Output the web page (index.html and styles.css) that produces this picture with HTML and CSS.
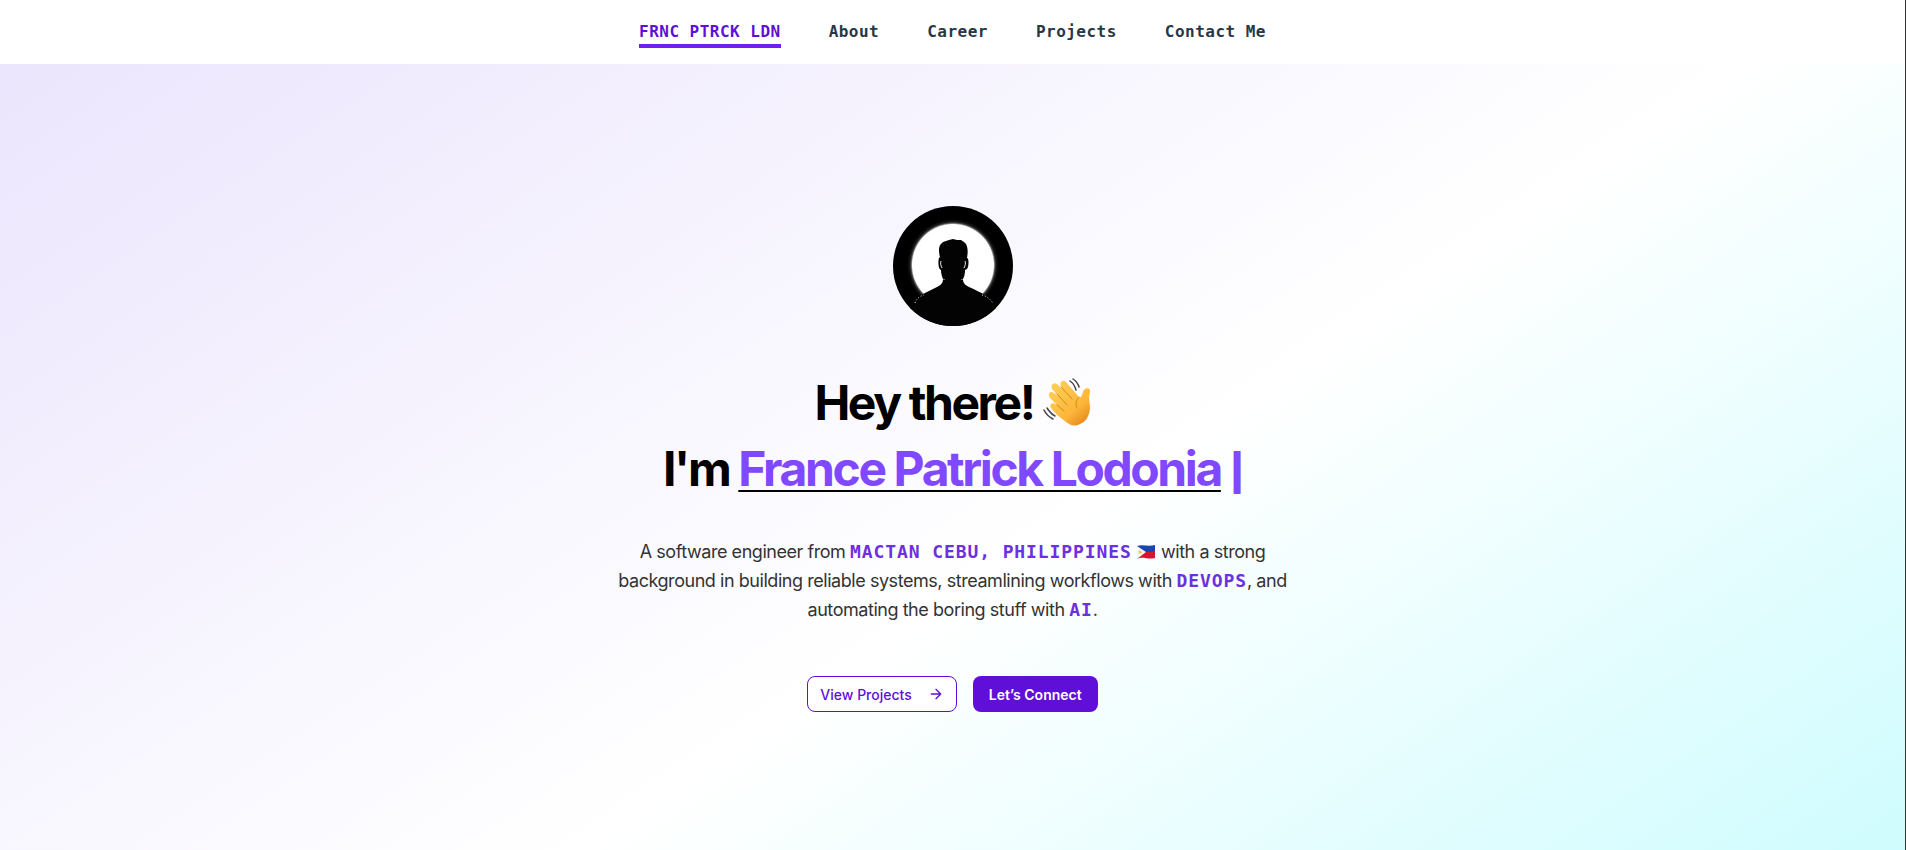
FILE: index.html
```
<!DOCTYPE html>
<html lang="en">
<head>
  <meta charset="UTF-8">
  <meta name="viewport" content="width=device-width, initial-scale=1.0">
  <title>France Patrick Lodonia</title>
  <link rel="stylesheet" href="styles.css">
</head>
<body>
  <header class="navbar">
    <nav class="nav-links">
      <a class="nav-link active" href="#home">FRNC PTRCK LDN</a>
      <a class="nav-link" href="#about">About</a>
      <a class="nav-link" href="#career">Career</a>
      <a class="nav-link" href="#projects">Projects</a>
      <a class="nav-link" href="#contact">Contact Me</a>
    </nav>
  </header>

  <main class="hero" id="home">
    <svg class="avatar" viewBox="0 0 120 120" role="img" aria-label="Portrait silhouette">
      <defs>
        <clipPath id="avatar-clip"><circle cx="60" cy="60" r="60"/></clipPath>
        <radialGradient id="halo">
          <stop offset="0.88" stop-color="#fff"/>
          <stop offset="0.91" stop-color="#555"/>
          <stop offset="0.94" stop-color="#161616"/>
          <stop offset="1" stop-color="#000"/>
        </radialGradient>
      </defs>
      <g clip-path="url(#avatar-clip)">
        <rect width="120" height="120" fill="#000"/>
        <circle cx="60" cy="59" r="46" fill="url(#halo)"/>
        <!-- head and shoulders -->
        <path fill="#030303" d="M47 51 C45 44 46 39 49 37 L50 36 L53 35 L56 34 L60 33 L64 34 L68 34 L71 36 L73 38 C75 42 75 46 74 52 C76 52 76 60 74 63 L72 64 C72 69 71 71 70 73 C70 77 72 79 76 81 C82 84 88 86 93 90 C100 94 105 101 108 122 L12 122 C14 103 18 94 26 90 C32 87 38 84 44 81 C48 79 50 77 50 73 C49 70 48 68 48 64 C45 63 45 55 46 52 Z"/>
        <path fill="none" stroke="#eee" stroke-width="1" d="M48 55 C47 57 48 60 49 62 M72 55 C73 57 72 60 71 62"/>
        <path fill="none" stroke="#ddd" stroke-width="1" stroke-dasharray="1 2" d="M22 97 C24 92 27 90 31 89 M89 89 C93 90 96 92 100 97 M51 73 L51 76 M69 73 L69 76"/>
      </g>
    </svg>

    <h1 class="title">
      Hey there!
      <svg class="wave" viewBox="0 0 48 48" role="img" aria-label="Waving hand">
        <defs>
          <linearGradient id="skin" x1="0" y1="0" x2="0.8" y2="1">
            <stop offset="0" stop-color="#ffd25a"/>
            <stop offset="0.7" stop-color="#fdb73a"/>
            <stop offset="1" stop-color="#e58a1d"/>
          </linearGradient>
        </defs>
        <path fill="url(#skin)" d="M23 44 C16 39 11 34 8 30 C6 27 9 24 12 26 L15 28 L7 20 C4 16 7 12 11 15 L15 18 L9 11 C7 7 11 3 15 7 L19 11 L18 8 C16 4 20 1 23 4 L36 19 C38 20 39 18 40 14 C41 9 48 9 47 14 C45 19 47 25 47 31 C46 38 43 44 37 46 C31 49 27 47 23 44 Z"/>
        <path fill="none" stroke="#d8861c" stroke-width="1" stroke-linecap="round" d="M18 9 L29 21 M14 16 L24 27 M14 27 L21 33 M36 19 C33 22 32 26 34 30"/>
        <path fill="none" stroke="#444" stroke-width="1.5" stroke-linecap="round" d="M30 1 C33 3 35 5 36 9 M27 3 C30 5 32 8 33 12 M1 32 C3 36 6 39 10 41 M4 30 C6 33 8 36 12 38"/>
      </svg>
      <br>
      I'm <span class="name">France Patrick Lodonia</span> <span class="cursor">|</span>
    </h1>

    <p class="intro">
      A software engineer from <strong class="keyword">MACTAN CEBU, PHILIPPINES</strong>
      <svg class="flag" viewBox="0 0 20 16" role="img" aria-label="Philippine flag">
        <path fill="#1646b0" d="M1 2 C7 0 12 3 19 1 V8 H1 Z"/>
        <path fill="#d51632" d="M1 8 C7 7 12 9 19 7 V14 C12 16 7 12 1 15 Z"/>
        <path fill="#f5f5f5" d="M1 2 L10 8 L1 15 Z"/>
        <circle cx="4" cy="8" r="1.5" fill="#f7c52e"/>
      </svg>
      with a strong background in building reliable systems, streamlining workflows with
      <strong class="keyword">DEVOPS</strong>, and automating the boring stuff with <strong class="keyword">AI</strong>.
    </p>

    <div class="actions">
      <button type="button" class="btn btn-outline">
        View Projects
        <svg class="arrow" viewBox="0 0 24 24" aria-hidden="true">
          <path d="M5 12h14M12 5l7 7-7 7"/>
        </svg>
      </button>
      <button type="button" class="btn btn-solid">Let’s Connect</button>
    </div>
  </main>
</body>
</html>
```
FILE: styles.css
```
* {
  box-sizing: border-box;
}

body {
  margin: 0;
  min-height: 100vh;
  display: flex;
  flex-direction: column;
  border-right: 1px solid #333;
  background: #fff;
  color: #000;
  font-family: Inter, sans-serif;
}

.navbar {
  height: 64px;
  display: flex;
  justify-content: center;
  align-items: center;
  background: #fff;
}

.nav-links {
  display: flex;
  gap: 48px;
}

.nav-link {
  padding-bottom: 2px;
  margin-top: 6px;
  border-bottom: 4px solid transparent;
  color: #283747;
  font-family: "DejaVu Sans Mono", monospace;
  font-size: 16px;
  font-weight: 700;
  line-height: 20px;
  letter-spacing: 0.03em;
  text-decoration: none;
}

.nav-link.active {
  color: #5f0fd8;
  border-color: #701ef5;
}

.hero {
  flex: 1;
  display: flex;
  flex-direction: column;
  align-items: center;
  justify-content: center;
  padding: 20px 16px 16px;
  text-align: center;
  background: linear-gradient(146deg, #ebe5fd, #fff 57%, #cffcfe);
}

.avatar {
  width: 120px;
  height: 120px;
}

.title {
  margin: 44px 0 0;
  font-size: 48px;
  font-weight: 700;
  line-height: 66px;
  letter-spacing: -0.05em;
}

.wave {
  width: 48px;
  height: 48px;
  vertical-align: -6px;
}

.name {
  color: #8048ff;
  text-decoration: underline 2px #000;
  text-decoration-skip-ink: none;
  text-underline-offset: 4px;
}

.cursor {
  color: #8048ff;
  font-size: 36px;
  font-weight: 900;
  line-height: 1;
}

.intro {
  max-width: 672px;
  margin: 35px 0 0;
  color: #333;
  font-size: 18px;
  line-height: 29px;
  letter-spacing: -0.025em;
}

.keyword {
  color: #6d2fe0;
  font-family: "DejaVu Sans Mono", monospace;
  letter-spacing: 0.05em;
}

.flag {
  width: 20px;
  height: 16px;
  vertical-align: -2px;
}

.actions {
  display: flex;
  gap: 16px;
  margin-top: 52px;
}

.btn {
  display: flex;
  align-items: center;
  height: 36px;
  padding: 0 16px;
  border: none;
  border-radius: 8px;
  font-family: inherit;
  font-size: 14px;
  font-weight: 500;
  cursor: pointer;
}

.btn-outline {
  gap: 16px;
  padding: 0 12px;
  border: 1px solid #600fd8;
  background: #fff;
  color: #600fd8;
}

.btn-solid {
  background: #600fd8;
  color: #fff;
  font-weight: 600;
}

.arrow {
  width: 16px;
  height: 16px;
  fill: none;
  stroke: currentColor;
  stroke-width: 2;
  stroke-linecap: round;
  stroke-linejoin: round;
}
```
